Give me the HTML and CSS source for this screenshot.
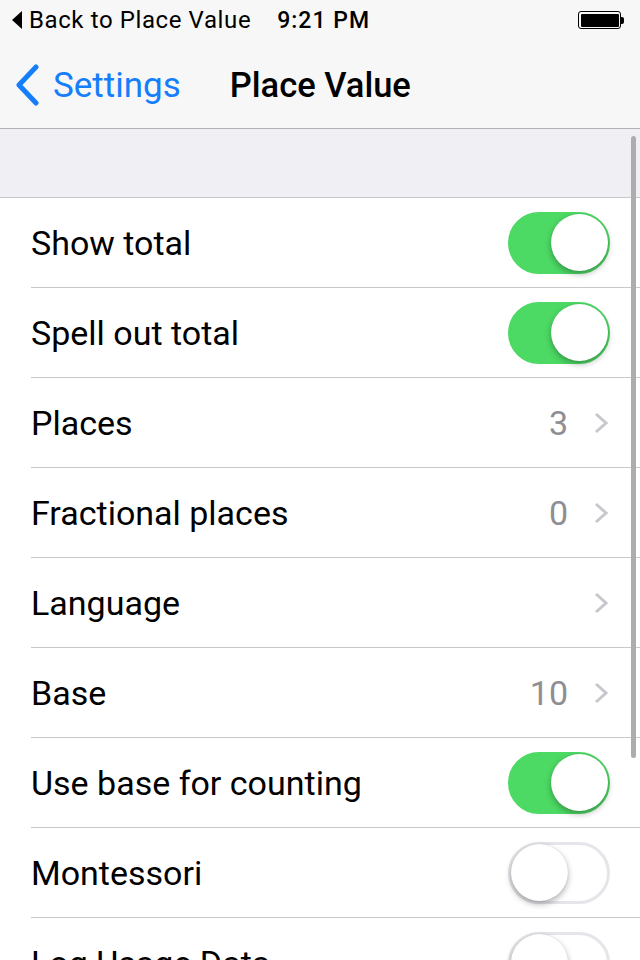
FILE: index.html
```html
<!DOCTYPE html>
<html>
<head>
<meta charset="utf-8">
<link rel="stylesheet" href="styles.css">
</head>
<body>
<div class="screen">
  <div class="status">
    <div class="status-left"><span class="tri"></span>Back to Place Value</div>
    <div class="status-time">9:21 PM</div>
    <div class="battery"><div class="battery-body"><div class="battery-fill"></div></div><div class="battery-tip"></div></div>
  </div>
  <div class="navbar">
    <div class="back">
      <svg class="back-chev" width="26" height="42" viewBox="0 0 26 42"><path d="M22 3 L5 21 L22 39" fill="none" stroke="#157efb" stroke-width="5" stroke-linecap="round" stroke-linejoin="round"/></svg>
      <span class="back-label">Settings</span>
    </div>
    <div class="title">Place Value</div>
  </div>
  <div class="content">
    <div class="section-gap"></div>
    <div class="list">
      <div class="row"><span class="label">Show total</span><div class="toggle on"><div class="knob"></div></div></div>
      <div class="row"><span class="label">Spell out total</span><div class="toggle on"><div class="knob"></div></div></div>
      <div class="row"><span class="label">Places</span><span class="value">3</span><svg class="chev" width="14" height="22" viewBox="0 0 14 22"><path d="M2 2 L12 11 L2 20" fill="none" stroke="#c7c7cc" stroke-width="3"/></svg></div>
      <div class="row"><span class="label">Fractional places</span><span class="value">0</span><svg class="chev" width="14" height="22" viewBox="0 0 14 22"><path d="M2 2 L12 11 L2 20" fill="none" stroke="#c7c7cc" stroke-width="3"/></svg></div>
      <div class="row"><span class="label">Language</span><span class="value"></span><svg class="chev" width="14" height="22" viewBox="0 0 14 22"><path d="M2 2 L12 11 L2 20" fill="none" stroke="#c7c7cc" stroke-width="3"/></svg></div>
      <div class="row"><span class="label">Base</span><span class="value">10</span><svg class="chev" width="14" height="22" viewBox="0 0 14 22"><path d="M2 2 L12 11 L2 20" fill="none" stroke="#c7c7cc" stroke-width="3"/></svg></div>
      <div class="row"><span class="label">Use base for counting</span><div class="toggle on"><div class="knob"></div></div></div>
      <div class="row"><span class="label">Montessori</span><div class="toggle"><div class="knob"></div></div></div>
      <div class="row"><span class="label">Log Usage Data</span><div class="toggle"><div class="knob"></div></div></div>
    </div>
    <div class="scrollbar"></div>
  </div>
</div>
</body>
</html>
```
FILE: styles.css
```css
* { box-sizing: border-box; }
html, body { margin: 0; padding: 0; }
body { font-family: "Roboto", "Inter", sans-serif; background: #fff; }
.screen { width: 640px; height: 960px; overflow: hidden; position: relative; }
.status {
  height: 40px; background: #f7f7f7; display: flex; align-items: center;
  padding: 0 16px 0 12px; font-size: 24px; color: #000; position: relative;
}
.status-left { display: flex; align-items: center; letter-spacing: 0.6px; }
.tri { width: 0; height: 0; border-top: 9px solid transparent; border-bottom: 9px solid transparent; border-right: 10px solid #000; margin-right: 7px; }
.status-time { font-weight: 500; font-size: 23px; letter-spacing: 1px; margin-left: 26px; }
.battery { margin-left: auto; display: flex; align-items: center; }
.battery-body { width: 43px; height: 18px; border: 1.5px solid #000; border-radius: 3px; padding: 1.5px; }
.battery-fill { width: 100%; height: 100%; background: #000; border-radius: 1px; }
.battery-tip { width: 3px; height: 7px; background: #000; border-radius: 0 2px 2px 0; }
.navbar {
  height: 89px; background: #f7f7f7; border-bottom: 1px solid #b2b2b2;
  display: flex; align-items: center; padding: 2px 0 0 14px;
}
.back { display: flex; align-items: center; color: #157efb; }
.back-chev { margin-right: 13px; }
.back-label { font-size: 35px; }
.title { font-size: 34.5px; font-weight: 500; margin-left: 49px; }
.content { position: relative; }
.section-gap { height: 69px; background: #efeff4; border-bottom: 1px solid #c8c7cc; }
.row {
  height: 90px; display: flex; align-items: center; padding: 0 30px 0 0; margin-left: 31px;
  border-bottom: 1px solid #c8c7cc; font-size: 34px; color: #000;
}
.label { flex: 1; }
.value { color: #8e8e93; margin-right: 26px; }
.chev { margin-right: 2px; }
.toggle {
  width: 102px; height: 62px; border-radius: 31px; background: #fff;
  border: 3px solid #e5e5ea; position: relative;
}
.toggle.on { background: #4cd964; border-color: #4cd964; }
.knob {
  position: absolute; top: -0.5px; left: -0.5px; width: 57px; height: 57px; border-radius: 50%;
  background: #fff; box-shadow: 0 3px 6px rgba(0,0,0,0.3), 0 0 1px rgba(0,0,0,0.2);
}
.toggle.on .knob { left: auto; right: -0.5px; }
.scrollbar {
  position: absolute; right: 4px; top: 7px; width: 5px; height: 622px;
  background: #adadad; border-radius: 3px;
}
```
